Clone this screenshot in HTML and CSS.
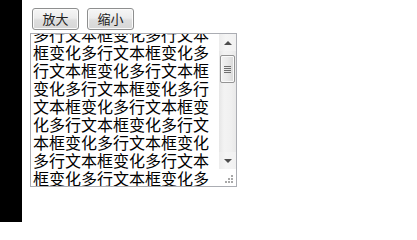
FILE: index.html
```html
<!DOCTYPE html>
<html>
<head>
<meta charset="utf-8">
<link rel="stylesheet" href="styles.css">
</head>
<body>
<div class="strip"></div>
<div class="main">
  <div class="toolbar">
    <button class="btn">放大</button>
    <button class="btn">缩小</button>
  </div>
  <div class="textbox">
    <div class="viewport">
      <div class="content">多行文本框变化多行文本框变化多行文本框变化多行文本框变化多行文本框变化多行文本框变化多行文本框变化多行文本框变化多行文本框变化多行文本框变化多行文本框变化多行文本框变化多行文本框变化多行文本框变化多行文本框变化</div>
    </div>
    <div class="scrollbar">
      <div class="arrow arrow-up"><span class="tri-up"></span></div>
      <div class="track">
        <div class="thumb">
          <span class="grip"></span><span class="grip"></span><span class="grip"></span><span class="grip"></span>
        </div>
      </div>
      <div class="arrow arrow-down"><span class="tri-down"></span></div>
      <div class="corner">
        <svg width="17" height="17" viewBox="0 0 17 17">
          <g fill="#a8a8a8">
            <rect x="12" y="6" width="2" height="2"/>
            <rect x="9" y="9" width="2" height="2"/>
            <rect x="12" y="9" width="2" height="2"/>
            <rect x="6" y="12" width="2" height="2"/>
            <rect x="9" y="12" width="2" height="2"/>
            <rect x="12" y="12" width="2" height="2"/>
          </g>
        </svg>
      </div>
    </div>
  </div>
</div>
</body>
</html>
```

FILE: styles.css
```css
html, body {
  margin: 0;
  padding: 0;
  background: #ffffff;
}
body {
  display: flex;
  width: 417px;
  height: 222px;
  overflow: hidden;
}
.strip {
  width: 22px;
  height: 222px;
  background: #000000;
  flex: none;
}
.main {
  padding: 8px 0 0 8px;
  display: flex;
  flex-direction: column;
}
.toolbar {
  display: flex;
  gap: 8px;
  padding-left: 2px;
}
.btn {
  width: 47px;
  height: 22px;
  margin: 0;
  padding: 0;
  border: 1px solid #8e8f8f;
  border-radius: 3px;
  background: linear-gradient(#f6f6f6 0%, #ececec 45%, #dedede 55%, #d6d6d6 100%);
  box-shadow: inset 0 0 0 1px #fbfbfb;
  font-family: "Noto Sans CJK SC", "Noto Sans", sans-serif;
  font-size: 13px;
  line-height: 18px;
  color: #222222;
}
.textbox {
  margin-top: 3px;
  width: 207px;
  height: 154px;
  box-sizing: border-box;
  border: 1px solid #abadb3;
  display: flex;
  overflow: hidden;
}
.viewport {
  flex: 1;
  height: 152px;
  overflow: hidden;
  padding: 0 0 0 2px;
}
.content {
  margin-top: -9px;
  font-family: "Noto Sans CJK SC", sans-serif;
  font-size: 16px;
  line-height: 18px;
  color: #000000;
  word-break: break-all;
}
.scrollbar {
  width: 17px;
  flex: none;
  display: flex;
  flex-direction: column;
  background: #ffffff;
}
.arrow {
  height: 17px;
  display: flex;
  align-items: center;
  justify-content: center;
  background: linear-gradient(to right, #ececec, #f5f5f5 40%, #f1f1f1);
}
.tri-up {
  width: 0;
  height: 0;
  border-left: 4px solid transparent;
  border-right: 4px solid transparent;
  border-bottom: 4px solid #4d4d4d;
}
.tri-down {
  width: 0;
  height: 0;
  border-left: 4px solid transparent;
  border-right: 4px solid transparent;
  border-top: 4px solid #4d4d4d;
}
.track {
  flex: 1;
  padding-top: 4px;
  background: linear-gradient(to right, #e6e6e6, #f3f3f3 30%, #f0f0f0 70%, #e9e9e9);
}
.thumb {
  margin: 0 1px;
  height: 28px;
  box-sizing: border-box;
  border: 1px solid #959595;
  border-radius: 2px;
  background: linear-gradient(to right, #f3f3f3, #e9e9e9 50%, #d8d8d8);
  box-shadow: inset 0 0 0 1px #fafafa;
  display: flex;
  flex-direction: column;
  align-items: center;
  justify-content: center;
  gap: 1px;
}
.grip {
  display: block;
  width: 7px;
  height: 1px;
  background: #6f6f6f;
}
.corner {
  height: 17px;
  background: #ffffff;
}
.corner svg {
  display: block;
}
```
